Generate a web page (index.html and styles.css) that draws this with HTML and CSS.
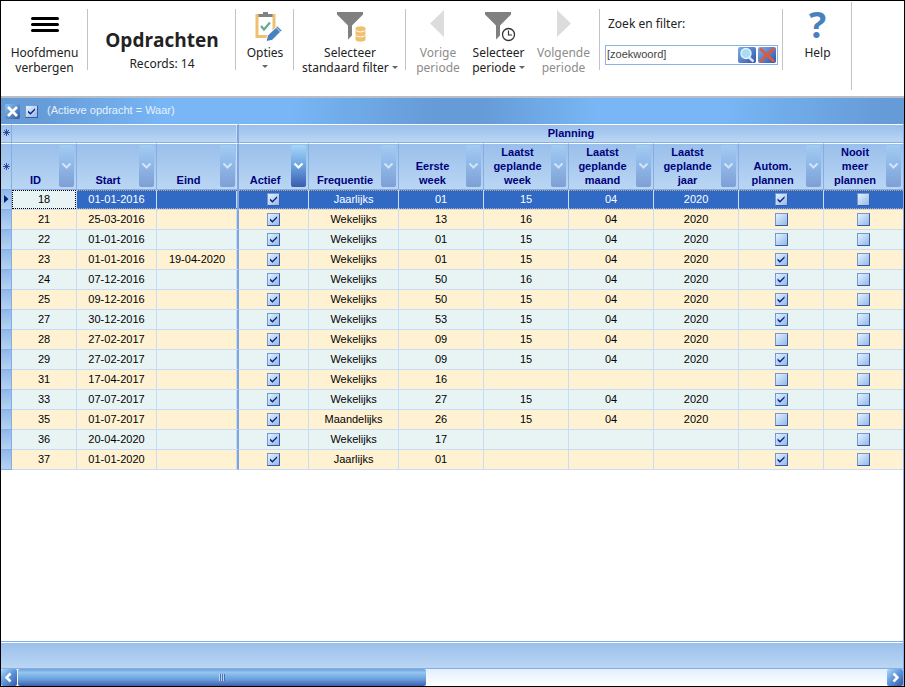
FILE: index.html
```html
<!DOCTYPE html>
<html lang="nl">
<head>
<meta charset="utf-8">
<title>Opdrachten</title>
<link rel="stylesheet" href="styles.css">
</head>
<body>
<header class="toolbar">
  <div class="group group-menu">
    <button class="tool" type="button">
      <svg class="icon" width="40" height="40" viewBox="0 0 40 40"><path d="M7.500 13.500h25M7.500 19.500h25M7.500 25.500h25" stroke="#000" stroke-width="3" stroke-linecap="round"/></svg>
      <span>Hoofdmenu<br>verbergen</span>
    </button>
  </div>
  <div class="group group-title">
    <h1>Opdrachten</h1>
    <p>Records: 14</p>
  </div>
  <div class="group group-options">
    <button class="tool" type="button">
      <svg class="icon" width="40" height="40" viewBox="0 0 40 40">
        <path d="M12 10.500h17v21h-17z" fill="#fff" stroke="#efc070" stroke-width="3"/>
        <path d="M13.500 9h14v3h-14zM18 7h5v3h-5z" fill="#808285"/>
        <path d="M16 21l3 3.500l6-7" fill="none" stroke="#6ba892" stroke-width="2.200"/>
        <path d="M21 36.500l1.500-6l10-9.500l4.500 4.500l-10 10z" fill="#4a80bb" stroke="#fff" stroke-width="1"/>
        <path d="M31 22.500l4.500 4.500" stroke="#fff" stroke-width=".8"/>
      </svg>
      <span>Opties</span>
      <i class="caret"></i>
    </button>
  </div>
  <div class="group group-filter">
    <button class="tool" type="button">
      <svg class="icon" width="40" height="40" viewBox="0 0 40 40">
        <path d="M7 7h26v2.500l-11 11v10l-4 4v-14l-11-11z" fill="#808080"/>
        <path d="M25.500 23.500v11c0 3 10 3 10 0v-11c0-3-10-3-10 0z" fill="#efc070"/>
        <path d="M25.500 25c2 2.500 8 2.500 10 0M25.500 30c2 2.500 8 2.500 10 0" fill="none" stroke="#fff"/>
      </svg>
      <span>Selecteer<br>standaard filter <i class="caret"></i></span>
    </button>
  </div>
  <div class="group group-period">
    <button class="tool tool-prev" type="button" disabled>
      <svg class="icon" width="40" height="40" viewBox="0 0 40 40"><path d="M26 5v27l-14-13.500z" fill="#dcdcdc"/></svg>
      <span>Vorige<br>periode</span>
    </button>
    <button class="tool tool-pick" type="button">
      <svg class="icon" width="40" height="40" viewBox="0 0 40 40">
        <path d="M6 7h26v2.500l-11 11v10l-4 4v-14l-11-11z" fill="#808080"/>
        <circle cx="29.500" cy="29.500" r="7.500" fill="#fff"/>
        <circle cx="29.500" cy="29.500" r="6" fill="#fff" stroke="#333" stroke-width="1.300"/>
        <path d="M29.500 25.500v4.500h3.500" fill="none" stroke="#333" stroke-width="1.200"/>
      </svg>
      <span>Selecteer<br>periode <i class="caret"></i></span>
    </button>
    <button class="tool tool-next" type="button" disabled>
      <svg class="icon" width="40" height="40" viewBox="0 0 40 40"><path d="M13 5v27l14-13.500z" fill="#dcdcdc"/></svg>
      <span>Volgende<br>periode</span>
    </button>
  </div>
  <form class="group group-search">
    <label for="search">Zoek en filter:</label>
    <div class="search-box">
      <input id="search" type="text" value="[zoekwoord]">
      <button type="button" class="mini" aria-label="Zoeken">
        <svg width="18" height="16" viewBox="0 0 18 16"><path d="M11 10.500l4.500 4" stroke="#d8e4f4" stroke-width="2.500"/><circle cx="8" cy="6.500" r="5" fill="#a5ddf5" stroke="#e8f2fc" stroke-width="1.300"/></svg>
      </button>
      <button type="button" class="mini" aria-label="Wissen">
        <svg width="18" height="16" viewBox="0 0 18 16"><path d="M2 1.500l14 13M16 1.500l-14 13" stroke="#dc5a3c" stroke-width="2.800"/></svg>
      </button>
    </div>
  </form>
  <div class="group group-help">
    <button class="tool" type="button"><b class="question" aria-hidden="true">?</b><span>Help</span></button>
  </div>
</header>

<div class="filter-bar">
  <button type="button" class="clear" aria-label="Filter verwijderen"><svg width="15" height="15" viewBox="0 0 15 15"><path d="M3 3l9 9M12 3l-9 9" stroke="#fff" stroke-width="2.800"/></svg></button>
  <input type="checkbox" id="filter-on" checked>
  <label for="filter-on">(Actieve opdracht = Waar)</label>
</div>

<main class="grid-area">
  <table class="grid">
    <colgroup>
      <col class="c-mark"><col class="c-id"><col class="c-date"><col class="c-end"><col class="c-active"><col class="c-freq">
      <col class="c-plan"><col class="c-plan"><col class="c-plan"><col class="c-plan"><col class="c-plan"><col>
    </colgroup>
    <thead>
      <tr class="bands"><th class="mark"><svg width="7" height="7" viewBox="0 0 7 7"><path d="M3.500 0v7M0 3.500h7M1 1l5 5M6 1l-5 5" stroke="#1b2f8f" stroke-width=".8"/></svg></th><th colspan="3" class="fixed-edge"></th><th colspan="8">Planning</th></tr>
      <tr class="heads" id="heads"></tr>
    </thead>
    <tbody id="rows"></tbody>
  </table>
</main>

<footer>
  <div class="summary"></div>
  <div class="scrollbar">
    <button type="button" class="arrow" aria-label="Naar links"><svg width="16" height="17" viewBox="0 0 16 17"><path d="M9.500 4.500l-4 4l4 4" fill="none" stroke="#fff" stroke-width="2.500"/></svg></button>
    <div class="track"><div class="thumb"><i class="grip"></i></div></div>
    <button type="button" class="arrow" aria-label="Naar rechts"><svg width="16" height="17" viewBox="0 0 16 17"><path d="M6.500 4.500l4 4l-4 4" fill="none" stroke="#fff" stroke-width="2.500"/></svg></button>
  </div>
</footer>
<script src="app.js"></script>
</body>
</html>
```
FILE: styles.css
```css
* { box-sizing: border-box; }
body {
  margin: 0;
  height: 100vh;
  display: flex;
  flex-direction: column;
  border: 1px solid #000;
  background: #fff;
  font: 11px/14px "Liberation Sans", Arial, sans-serif;
  color: #000;
}
button { border: 0; padding: 0; margin: 0; background: none; font: inherit; color: inherit; }
svg { display: block; }

/* toolbar */
.toolbar {
  display: flex;
  align-items: flex-start;
  height: 97px;
  flex: none;
  border-bottom: 2px solid #b9bec6;
  font: 12px/15px "Noto Sans", "Open Sans", sans-serif;
  color: #222;
}
.group { position: relative; height: 84px; flex: none; display: flex; justify-content: center; }
.group::after { content: ""; position: absolute; right: 0; top: 8px; width: 1px; height: 61px; background: #c3c3c3; }
.group-menu { width: 87px; }
.group-title { width: 148px; flex-direction: column; justify-content: flex-start; align-items: center; padding-top: 27px; }
.group-title h1 { margin: 0; font: bold 19px/24px "Open Sans", "Noto Sans", sans-serif; }
.group-title p { margin: 4px 0 0; }
.group-options { width: 58px; }
.group-filter { width: 112px; }
.group-period { width: 194px; }
.group-search { width: 183px; flex-direction: column; justify-content: flex-start; padding: 15px 5px 0; }
.group-help { width: 69px; height: 89px; }
.group-help::after { top: 1px; height: 88px; }
.tool { display: flex; flex-direction: column; align-items: center; padding-top: 4px; white-space: nowrap; }
.tool:disabled { color: #8c8c8c; }
.tool-prev { width: 64px; }
.tool-pick { width: 57px; }
.tool-next { width: 73px; }
.icon { flex: none; }
.caret { display: inline-block; border: 3px solid transparent; border-top-color: #666; border-bottom: 0; vertical-align: 3px; }
.tool > .caret { margin-top: 5px; }
.question { font: bold 36px/40px "Open Sans", sans-serif; height: 40px; color: #4a80bb; }
.group-search label { padding-left: 3px; }
.search-box { display: flex; align-items: center; gap: 2px; height: 20px; margin-top: 14px; padding-right: 1px; border: 1px solid #8db2e3; }
.search-box input { flex: 1; min-width: 0; border: 0; padding: 0 1px 2px; outline: 0; background: none; font: 11px "Liberation Sans", Arial, sans-serif; color: #444; }
.mini { width: 18px; height: 16px; border-radius: 2px; background: linear-gradient(135deg, #7fb0e8, #2f55a8); }

/* active filter */
.filter-bar {
  display: flex;
  align-items: center;
  flex: none;
  height: 26px;
  padding-left: 4px;
  color: #e6f1fd;
  background: linear-gradient(90deg, #659bd7 4%, #78b6f5 18%, #78b6f5 32%, #659bd7 48%, #659bd7 53%, #78b6f5 66%, #78b6f5 80%, #659bd7 98%);
}
.clear { width: 15px; height: 15px; margin-right: 5px; border-radius: 2px; background: linear-gradient(135deg, #8cc3f3, #34589f); }
.filter-bar label { margin-left: 9px; padding-bottom: 2px; }
input[type="checkbox"] {
  appearance: none;
  display: block;
  width: 13px;
  height: 13px;
  margin: 0;
  border: 1px solid;
  border-color: #7797cf #3c5ba5 #3c5ba5 #7797cf;
  background: linear-gradient(135deg, #e2f3fe, #93b7ea);
}
input[type="checkbox"]:checked::before {
  content: "";
  display: block;
  width: 11px;
  height: 11px;
  background: #0a1f7a;
  clip-path: polygon(18% 45%, 40% 66%, 82% 24%, 82% 42%, 40% 84%, 18% 63%);
}

/* data grid */
.grid-area { flex: 1; min-height: 0; overflow: hidden; border-right: 1px solid #86aee6; }
.grid { width: 100%; table-layout: fixed; border-collapse: separate; border-spacing: 0; }
.c-mark { width: 11px; }
.c-id { width: 65px; }
.c-date { width: 80px; }
.c-end { width: 82px; }
.c-active { width: 70px; }
.c-freq { width: 90px; }
.c-plan { width: 85px; }
th {
  padding: 0;
  color: #00007b;
  border-right: 1px solid #86aee6;
  border-bottom: 1px solid #86aee6;
  border-top: 1px solid #fff;
  background: linear-gradient(#9abfeb, #bad6f3);
}
tr > :last-child { border-right: 0; }
.bands th { height: 19px; padding-bottom: 2px; }
.heads th { height: 47px; vertical-align: bottom; }
.heads .mark { vertical-align: middle; }
.mark svg { margin: 0 auto; }
.bands .fixed-edge, .heads .fixed-edge, tbody td:nth-child(4) { border-right: 2px solid #7fa5dc; box-shadow: inset -1px 0 #c9dcf5; }
.head { display: flex; align-items: flex-end; height: 45px; padding: 1px 2px 2px 0; }
.head span { flex: 1; }
.drop { width: 15px; height: 42px; flex: none; align-self: flex-start; border-radius: 2px; background: linear-gradient(#a3caf0, #8fb9e9 45%, #7f9fd4); }
.drop svg { margin: auto; opacity: .6; }
.drop-on { background: linear-gradient(#a5d5f7, #6aa3e0 50%, #3a5cad); }
.drop-on svg { opacity: 1; }
td {
  height: 20px;
  padding: 0 0 1px;
  text-align: center;
  border-right: 1px solid #c9dcf5;
  border-bottom: 1px solid #c9dcf5;
  background: #e8f4f4;
}
tbody tr:nth-child(even) td { background: #fff2d2; }
td input[type="checkbox"] { margin: 0 auto; }
tbody td.row-mark, tbody tr:nth-child(even) td.row-mark { border-color: #86aee6; background: linear-gradient(#8fb8e9, #b5d2f2); }
.row-mark svg { margin: 0 auto; }
.current td { position: relative; color: #fff; background: #316ac5; }
.current td:nth-child(n+3)::after {
  content: "";
  position: absolute;
  inset: 0;
  background:
    repeating-linear-gradient(90deg, #c9a878 0 1px, #316ac5 1px 2px) top / 100% 1px no-repeat,
    repeating-linear-gradient(90deg, #c9a878 0 1px, #316ac5 1px 2px) bottom / 100% 1px no-repeat;
  pointer-events: none;
}
.current td:nth-child(2) { color: #000; background: #e8f4f4; }
.current td:nth-child(2)::after { content: ""; position: absolute; inset: 0; border: 1px dotted #000; }

/* summary strip and scrollbar */
footer { flex: none; }
.summary { height: 28px; border: 1px solid #86aee6; border-width: 1px 1px 1px 0; box-shadow: inset 0 1px #fff; background: linear-gradient(#9abfeb, #bad6f3); }
.scrollbar { display: flex; height: 17px; background: linear-gradient(#e2effc, #fff); border-right: 1px solid #86aee6; }
.arrow { width: 16px; height: 17px; flex: none; border-radius: 2px; background: linear-gradient(135deg, #a9dbfa, #5d92d8 50%, #3558a6); }
.track { flex: 1; padding-left: 1px; }
.thumb { width: 47%; height: 17px; display: flex; align-items: center; justify-content: center; border-radius: 2px; background: linear-gradient(#6f9fdb, #93c6ee 20%, #6ba0dd 60%, #3d5fae); }
.grip { width: 6px; height: 7px; background: repeating-linear-gradient(90deg, #b9d6f5 0 1px, #4a70b8 1px 2px); }
```
FILE: app.js
```js
const columns = ["ID", "Start", "Eind", "Actief", "Frequentie", "Eerste week", "Laatst geplande week",
  "Laatst geplande maand", "Laatst geplande jaar", "Autom. plannen", "Nooit meer plannen"];

// id, start, eind, frequentie, eerste week, laatste week, maand, jaar, autom. plannen
const orders = [
  [18, "01-01-2016", "", "Jaarlijks", "01", "15", "04", "2020", true],
  [21, "25-03-2016", "", "Wekelijks", "13", "16", "04", "2020", false],
  [22, "01-01-2016", "", "Wekelijks", "01", "15", "04", "2020", false],
  [23, "01-01-2016", "19-04-2020", "Wekelijks", "01", "15", "04", "2020", true],
  [24, "07-12-2016", "", "Wekelijks", "50", "16", "04", "2020", true],
  [25, "09-12-2016", "", "Wekelijks", "50", "15", "04", "2020", true],
  [27, "30-12-2016", "", "Wekelijks", "53", "15", "04", "2020", true],
  [28, "27-02-2017", "", "Wekelijks", "09", "15", "04", "2020", false],
  [29, "27-02-2017", "", "Wekelijks", "09", "15", "04", "2020", true],
  [31, "17-04-2017", "", "Wekelijks", "16", "", "", "", false],
  [33, "07-07-2017", "", "Wekelijks", "27", "15", "04", "2020", true],
  [35, "01-07-2017", "", "Maandelijks", "26", "15", "04", "2020", false],
  [36, "20-04-2020", "", "Wekelijks", "17", "", "", "", true],
  [37, "01-01-2020", "", "Jaarlijks", "01", "", "", "", true]
];

const chevron = '<svg width="11" height="8" viewBox="0 0 11 8"><path d="M1.500 1.500l4 4l4-4" fill="none" stroke="#fff" stroke-width="2.200"/></svg>';
const star = document.querySelector(".bands .mark").outerHTML;

document.getElementById("heads").innerHTML = star + columns.map(name =>
  `<th${name === "Eind" ? ' class="fixed-edge"' : ""}><div class="head"><span>${name.replaceAll(" ", "<br>")}</span>` +
  `<button type="button" class="drop${name === "Actief" ? " drop-on" : ""}" aria-label="Filter ${name}">${chevron}</button></div></th>`
).join("");

const box = (name, on) => `<input type="checkbox" aria-label="${name}"${on ? " checked" : ""}>`;

document.getElementById("rows").innerHTML = orders.map((order, index) => {
  const [id, start, end, freq, first, week, month, year, auto] = order;
  const marker = index ? "" : '<svg width="5" height="8" viewBox="0 0 5 8"><path d="M0 0l4.500 4l-4.500 4z" fill="#0a1f7a"/></svg>';
  const cells = [id, start, end, box("Actief", true), freq, first, week, month, year,
    box("Autom. plannen", auto), box("Nooit meer plannen", false)];
  return `<tr${index ? "" : ' class="current"'}><td class="row-mark">${marker}</td>` +
    cells.map(cell => `<td>${cell}</td>`).join("") + "</tr>";
}).join("");
```
